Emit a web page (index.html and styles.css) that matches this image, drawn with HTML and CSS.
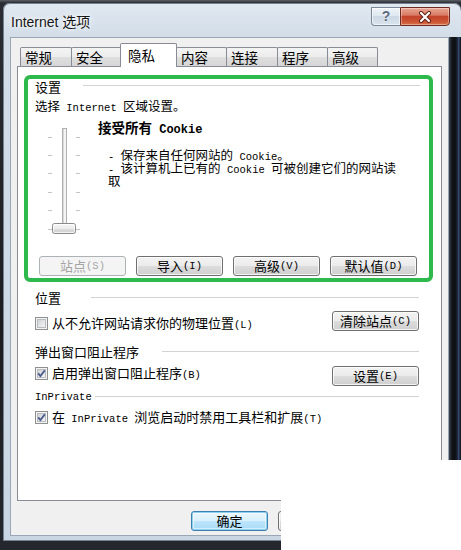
FILE: index.html
```html
<!DOCTYPE html>
<html lang="zh-CN">
<head>
<meta charset="utf-8">
<title>Internet 选项</title>
<link rel="stylesheet" href="styles.css">
</head>
<body>
<div class="screen">
  <div class="window">
    <div class="titlebar">
      <span class="title">Internet 选项</span>
      <div class="caps">
        <div class="cap help">?</div>
        <div class="cap close">
          <svg width="14" height="12" viewBox="0 0 14 12">
            <path d="M3 2 L11 10 M11 2 L3 10" stroke="#5a1c12" stroke-width="4" stroke-linecap="round"/>
            <path d="M3 2 L11 10 M11 2 L3 10" stroke="#ffffff" stroke-width="2.2" stroke-linecap="round"/>
          </svg>
        </div>
      </div>
    </div>
    <div class="middle">
      <div class="frame-left"></div>
      <div class="dialog">
        <div class="tabs">
          <div class="tab w52">常规</div>
          <div class="tab w51">安全</div>
          <div class="tab sel">隐私</div>
          <div class="tab w51">内容</div>
          <div class="tab w52">连接</div>
          <div class="tab w51">程序</div>
          <div class="tab w51">高级</div>
        </div>
        <div class="panel">
          <div class="hl">
            <div class="grp-head in-hl"><span class="grp-label">设置</span><span class="rule r-set"></span></div>
            <div class="intro">选择<span class="m"> Internet </span>区域设置。</div>
            <div class="slider-area">
              <svg class="slider" width="36" height="134" viewBox="0 0 36 134">
                <defs>
                  <linearGradient id="thumb" x1="0" y1="0" x2="0" y2="1">
                    <stop offset="0" stop-color="#f7f7f7"/>
                    <stop offset="0.5" stop-color="#ececec"/>
                    <stop offset="0.5" stop-color="#dedede"/>
                    <stop offset="1" stop-color="#cfcfcf"/>
                  </linearGradient>
                </defs>
                <g stroke="#c4c4c4" stroke-width="1">
                  <line x1="2" y1="21.5" x2="6" y2="21.5"/>
                  <line x1="2" y1="39.5" x2="6" y2="39.5"/>
                  <line x1="2" y1="57.5" x2="6" y2="57.5"/>
                  <line x1="2" y1="76.5" x2="6" y2="76.5"/>
                  <line x1="2" y1="94.5" x2="6" y2="94.5"/>
                  <line x1="2" y1="113.5" x2="6" y2="113.5"/>
                  <line x1="30" y1="21.5" x2="34" y2="21.5"/>
                  <line x1="30" y1="39.5" x2="34" y2="39.5"/>
                  <line x1="30" y1="57.5" x2="34" y2="57.5"/>
                  <line x1="30" y1="76.5" x2="34" y2="76.5"/>
                  <line x1="30" y1="94.5" x2="34" y2="94.5"/>
                  <line x1="30" y1="113.5" x2="34" y2="113.5"/>
                </g>
                <rect x="16.5" y="12.5" width="4" height="100" fill="#f4f4f4" stroke="#b0b0b0"/>
                <line x1="17.5" y1="13" x2="17.5" y2="112" stroke="#d8d8d8"/>
                <rect x="6.5" y="107.5" width="23" height="10" rx="2" fill="url(#thumb)" stroke="#8a8a8a"/>
                <rect x="7.5" y="108.5" width="21" height="8" rx="1" fill="none" stroke="#ffffff" stroke-opacity="0.7"/>
              </svg>
              <div class="slider-text">
                <div class="level">接受所有<span class="mb"> Cookie</span></div>
                <div class="desc">
                  <div class="dl"><span class="m">- </span>保存来自任何网站的<span class="m"> Cookie</span>。</div>
                  <div class="dl"><span class="m">- </span>该计算机上已有的<span class="m"> Cookie </span>可被创建它们的网站读</div>
                  <div class="dl">取</div>
                </div>
              </div>
            </div>
            <div class="btn-row">
              <div class="btn disabled">站点<span class="m">(S)</span></div>
              <div class="btn">导入<span class="m">(I)</span></div>
              <div class="btn">高级<span class="m">(V)</span></div>
              <div class="btn">默认值<span class="m">(D)</span></div>
            </div>
          </div>

          <div class="sect">
            <div class="grp-head h-loc"><span class="grp-label">位置</span><span class="rule r-loc"></span></div>
            <div class="opt-row r1">
              <div class="check c1">
                <svg width="13" height="13" viewBox="0 0 13 13">
                  <defs>
                    <linearGradient id="cb" x1="0" y1="0" x2="1" y2="1">
                      <stop offset="0" stop-color="#cfd1d4"/>
                      <stop offset="1" stop-color="#f7f7f7"/>
                    </linearGradient>
                  </defs>
                  <rect x="0.5" y="0.5" width="12" height="12" fill="#f4f4f4" stroke="#8e8f8f"/>
                  <rect x="2.5" y="2.5" width="8" height="8" fill="url(#cb)" stroke="#b8bcc1"/>
                </svg>
                <span>从不允许网站请求你的物理位置<span class="m">(L)</span></span>
              </div>
              <div class="btn">清除站点<span class="m">(C)</span></div>
            </div>

            <div class="grp-head h-pop"><span class="grp-label">弹出窗口阻止程序</span><span class="rule r-pop"></span></div>
            <div class="opt-row r2">
              <div class="check c2">
                <svg width="13" height="13" viewBox="0 0 13 13">
                  <rect x="0.5" y="0.5" width="12" height="12" fill="#f4f4f4" stroke="#8e8f8f"/>
                  <rect x="2.5" y="2.5" width="8" height="8" fill="url(#cb)" stroke="#b8bcc1"/>
                  <path d="M3.2 6.4 L5.4 9 L9.8 3.4" fill="none" stroke="#4a5c8c" stroke-width="1.8"/>
                </svg>
                <span>启用弹出窗口阻止程序<span class="m">(B)</span></span>
              </div>
              <div class="btn">设置<span class="m">(E)</span></div>
            </div>

            <div class="grp-head h-inp"><span class="grp-label m">InPrivate</span><span class="rule r-inp"></span></div>
            <div class="opt-row r3">
              <div class="check c3">
                <svg width="13" height="13" viewBox="0 0 13 13">
                  <rect x="0.5" y="0.5" width="12" height="12" fill="#f4f4f4" stroke="#8e8f8f"/>
                  <rect x="2.5" y="2.5" width="8" height="8" fill="url(#cb)" stroke="#b8bcc1"/>
                  <path d="M3.2 6.4 L5.4 9 L9.8 3.4" fill="none" stroke="#4a5c8c" stroke-width="1.8"/>
                </svg>
                <span>在<span class="m"> InPrivate </span>浏览启动时禁用工具栏和扩展<span class="m">(T)</span></span>
              </div>
            </div>
          </div>
        </div>
        <div class="dlg-btns">
          <div class="btn default">确定</div>
          <div class="btn">取消</div>
          <div class="btn">应用<span class="m">(A)</span></div>
        </div>
      </div>
      <div class="frame-right"></div>
    </div>
    <div class="frame-bottom"></div>
  </div>
  <div class="crop crop-a"></div>
  <div class="crop crop-b"></div>
</div>
</body>
</html>
```

FILE: styles.css
```css
* { box-sizing: border-box; margin: 0; padding: 0; }

html, body { width: 461px; height: 550px; overflow: hidden; }

body {
  background: #1c1f26;
  font-family: "Noto Sans CJK SC", "Liberation Sans", sans-serif;
  font-size: 13px;
  color: #000;
}

.screen {
  position: relative;
  width: 461px;
  height: 550px;
  overflow: hidden;
  background: linear-gradient(to bottom, #5b5f66 0, #2a2d33 3px, #1b1d22 60%, #24272d 100%);
}

.m {
  font-family: "Liberation Mono", "Noto Sans CJK SC", monospace;
  font-size: 10.5px;
}

.mb {
  font-family: "Liberation Mono", "Noto Sans CJK SC", monospace;
  font-size: 12px;
  font-weight: bold;
}

/* window frame */
.window {
  margin: 3px 0 0 3px;
  width: 458px;
  height: 538px;
  display: flex;
  flex-direction: column;
  border-radius: 7px 7px 0 0;
  background: linear-gradient(to bottom, #e1e9f1 0, #d2dde8 34px, #cad6e3 100%);
  box-shadow: inset 0 1px 0 #75818d, inset 1px 0 0 #75818d, inset 0 -1px 0 #75818d;
}

.titlebar {
  height: 34px;
  display: flex;
  align-items: flex-start;
  justify-content: space-between;
  padding-left: 8px;
}

.title {
  font-family: "Liberation Sans", "Noto Sans CJK SC", sans-serif;
  font-size: 14px;
  line-height: 20px;
  margin-top: 9px;
  color: #151515;
  text-shadow: 0 0 6px #ffffff, 0 0 3px #ffffff;
}

.caps {
  display: flex;
  margin-top: 4px;
  margin-right: 11px;
}

.cap {
  height: 19px;
  display: flex;
  align-items: center;
  justify-content: center;
}

.help {
  width: 29px;
  border: 1px solid #7b8896;
  border-right: none;
  border-radius: 0 0 0 4px;
  background: linear-gradient(to bottom, #eef3f8 0, #dde6ef 50%, #ccd8e4 50%, #d9e4ee 100%);
  box-shadow: inset 0 0 0 1px rgba(255, 255, 255, 0.6);
  font-family: "Liberation Sans", sans-serif;
  font-size: 14px;
  font-weight: bold;
  color: #5b6b7d;
  text-shadow: 0 0 2px #ffffff;
  line-height: 17px;
}

.close {
  width: 50px;
  border: 1px solid #6f2a1f;
  border-radius: 0 0 4px 0;
  background: linear-gradient(to bottom, #e9a896 0, #d87a63 42%, #c3432b 50%, #cc5533 80%, #d8744d 100%);
  box-shadow: inset 0 0 0 1px rgba(255, 255, 255, 0.35);
}

.middle {
  display: flex;
  height: 499px;
}

.frame-left { width: 7px; }

.frame-right {
  width: 12px;
  background: linear-gradient(to right, #3e4552 0, #121418 25%, #0c0e12 50%, #1d2638 70%, #344a70 80%, #0d0f14 100%);
}

.frame-bottom { height: 5px; }

.dialog {
  width: 439px;
  background: #f0f0f0;
  border: 1px solid #98a6b5;
  padding: 5px 6px 0 6px;
  display: flex;
  flex-direction: column;
}

/* tabs */
.tabs {
  display: flex;
  align-items: flex-end;
  height: 23px;
  padding-left: 3px;
}

.tab {
  height: 19px;
  border: 1px solid #898c95;
  border-bottom: none;
  border-radius: 2px 2px 0 0;
  background: linear-gradient(to bottom, #f4f4f4 0, #ececec 50%, #dfdfdf 50%, #d6d6d6 100%);
  font-size: 13.5px;
  line-height: 18px;
  padding-left: 4px;
  margin-left: -1px;
  white-space: nowrap;
}

.tab:first-child { margin-left: 0; }
.w51 { width: 51px; }
.w52 { width: 52px; }

.tab.sel {
  width: 57px;
  height: 24px;
  margin-left: -2px;
  margin-bottom: -1px;
  background: #ffffff;
  line-height: 22px;
  padding-left: 7px;
  position: relative;
  z-index: 1;
}

.panel {
  height: 435px;
  border: 1px solid #898c95;
  background: #ffffff;
}

/* green highlight */
.hl {
  margin: 8px 0 0 6px;
  width: 409px;
  height: 207px;
  border: 4px solid #2db94b;
  border-radius: 6px;
  display: flex;
  flex-direction: column;
}

.grp-head {
  height: 16px;
  display: flex;
  align-items: center;
}

.grp-head.in-hl {
  padding-left: 7px;
  padding-right: 9px;
}

.grp-label {
  line-height: 16px;
  white-space: nowrap;
}

.rule {
  flex: 1;
  height: 2px;
  border-top: 1px solid #d3d3d3;
  border-bottom: 1px solid #ffffff;
}

.r-set { margin-left: 22px; margin-bottom: 3px; }
.r-loc { margin-left: 30px; }
.r-pop { margin-left: 23px; }
.r-inp { margin-left: 3px; }

.intro {
  margin-top: 4px;
  padding-left: 7px;
  height: 14px;
  line-height: 14px;
  font-size: 12.5px;
  white-space: nowrap;
}

.slider-area {
  display: flex;
  height: 134px;
  margin-top: 3px;
}

.slider {
  margin-left: 18px;
  flex: none;
}

.slider-text {
  margin-left: 16px;
  padding-top: 4px;
}

.level {
  font-weight: bold;
  font-size: 13.5px;
  line-height: 14px;
  white-space: nowrap;
}

.desc {
  margin-top: 11px;
  padding-left: 10px;
  font-size: 12.5px;
}

.dl {
  height: 13px;
  line-height: 13px;
  white-space: nowrap;
}

.btn-row {
  margin-top: 6px;
  display: flex;
  gap: 10px;
  padding-left: 11px;
}

/* buttons */
.btn {
  width: 87px;
  height: 20px;
  border: 1px solid #707070;
  border-radius: 3px;
  background: linear-gradient(to bottom, #f3f3f3 0, #ebebeb 50%, #dddddd 50%, #cfcfcf 100%);
  box-shadow: inset 0 0 0 1px rgba(255, 255, 255, 0.75);
  display: flex;
  align-items: center;
  justify-content: center;
  font-size: 13px;
  line-height: 18px;
  white-space: nowrap;
  flex: none;
}

.btn.disabled {
  border-color: #adb2b5;
  background: #f4f4f4;
  color: #a3a3a3;
  box-shadow: none;
}

.btn.default {
  border-color: #3c7fb1;
  background: linear-gradient(to bottom, #eaf6fd 0, #d9f0fc 50%, #bee6fd 50%, #a7d9f5 100%);
  box-shadow: inset 0 0 0 1px #8fd0f0, inset 0 0 0 2px rgba(255, 255, 255, 0.5);
}

/* lower sections */
.sect {
  padding: 0 22px 0 17px;
}

.h-loc { margin-top: 8px; }
.h-pop { margin-top: 13px; }
.h-inp { margin-top: 3px; }

.opt-row {
  height: 20px;
  display: flex;
  justify-content: space-between;
  align-items: flex-start;
}

.r1 { margin-top: 5px; }
.r2 { margin-top: 6px; }
.r3 { margin-top: 6px; height: 14px; }

.check {
  display: flex;
  align-items: center;
  gap: 4px;
  height: 13px;
  line-height: 13px;
  white-space: nowrap;
}

.check svg { flex: none; }

.c1 { margin-top: 6px; }
.c2 { margin-top: 1px; }
.c3 { margin-top: 0; }

/* dialog buttons */
.dlg-btns {
  display: flex;
  justify-content: flex-end;
  gap: 10px;
  margin-top: 10px;
}

.dlg-btns .btn { width: 77px; }

/* cropped-out area of the screenshot */
.crop {
  position: absolute;
  background: #ffffff;
}

.crop-a { left: 281px; top: 497px; width: 180px; height: 53px; }
.crop-b { left: 441px; top: 460px; width: 20px; height: 90px; }
```
